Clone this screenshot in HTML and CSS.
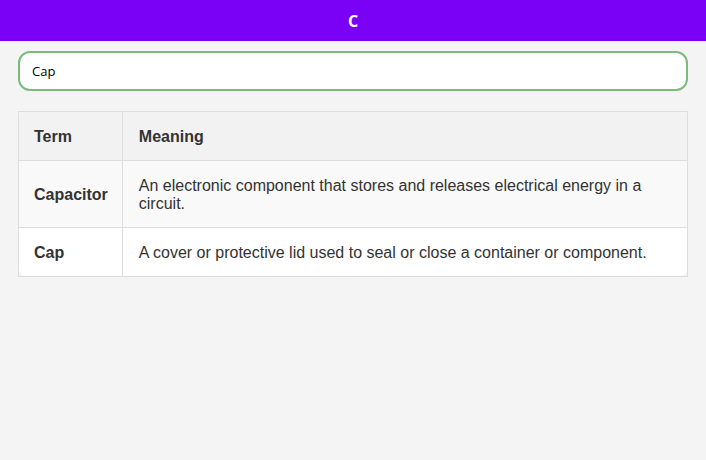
FILE: index.html
```html
<!DOCTYPE html>
<html>
<head>
<meta charset="utf-8">
<link rel="stylesheet" href="styles.css">
</head>
<body>
<header class="topbar">C</header>
<main class="content">
  <input class="search" type="text" value="Cap">
  <div class="table-frame">
    <table class="terms">
      <thead>
        <tr><th class="col-term">Term</th><th>Meaning</th></tr>
      </thead>
      <tbody>
        <tr class="odd"><td class="term">Capacitor</td><td>An electronic component that stores and releases electrical energy in a circuit.</td></tr>
        <tr class="even"><td class="term">Cap</td><td>A cover or protective lid used to seal or close a container or component.</td></tr>
      </tbody>
    </table>
  </div>
</main>
</body>
</html>
```
FILE: styles.css
```css
html, body {
  margin: 0;
  padding: 0;
  background: #f4f4f4;
  font-family: "Liberation Sans", Arial, sans-serif;
}
.topbar {
  height: 41px;
  background: #7a00f6;
  color: #fff;
  font-family: "Open Sans", sans-serif;
  font-weight: 700;
  font-size: 16px;
  display: flex;
  align-items: center;
  justify-content: center;
}
.content {
  padding: 10px 18px;
  display: flex;
  flex-direction: column;
  gap: 20px;
}
.search {
  box-sizing: border-box;
  height: 40px;
  width: 100%;
  border: 2px solid #7dba7d;
  border-radius: 12px;
  background: #fff;
  padding: 0 12px;
  font-family: "Open Sans", sans-serif;
  font-size: 13px;
  color: #000;
  outline: none;
}
.table-frame {
  border: 1px solid #ddd;
  background: #f4f4f4;
}
.terms {
  width: 100%;
  border-collapse: separate;
  border-spacing: 0;
  font-size: 16px;
  color: #333;
}
.terms th, .terms td {
  padding: 16px 15px 14px 16px;
  text-align: left;
  vertical-align: middle;
  line-height: 18px;
}
.terms th:first-child, .terms td:first-child { padding-left: 15px; padding-right: 14px; }
.col-term { width: 73px; }
.terms th + th, .terms td + td {
  border-left: 1px solid #ddd;
}
.terms tbody td {
  border-top: 1px solid #ddd;
}
.terms th { font-weight: 700; background: #f2f2f2; }
.odd td { background: #f9f9f9; }
.even td { background: #fff; }
.term { font-weight: 700; white-space: nowrap; }
.terms thead th:first-child { border-top-left-radius: 7px; }
.terms thead th:last-child { border-top-right-radius: 7px; }
.terms tbody tr:last-child td:first-child { border-bottom-left-radius: 7px; }
.terms tbody tr:last-child td:last-child { border-bottom-right-radius: 7px; }
```
